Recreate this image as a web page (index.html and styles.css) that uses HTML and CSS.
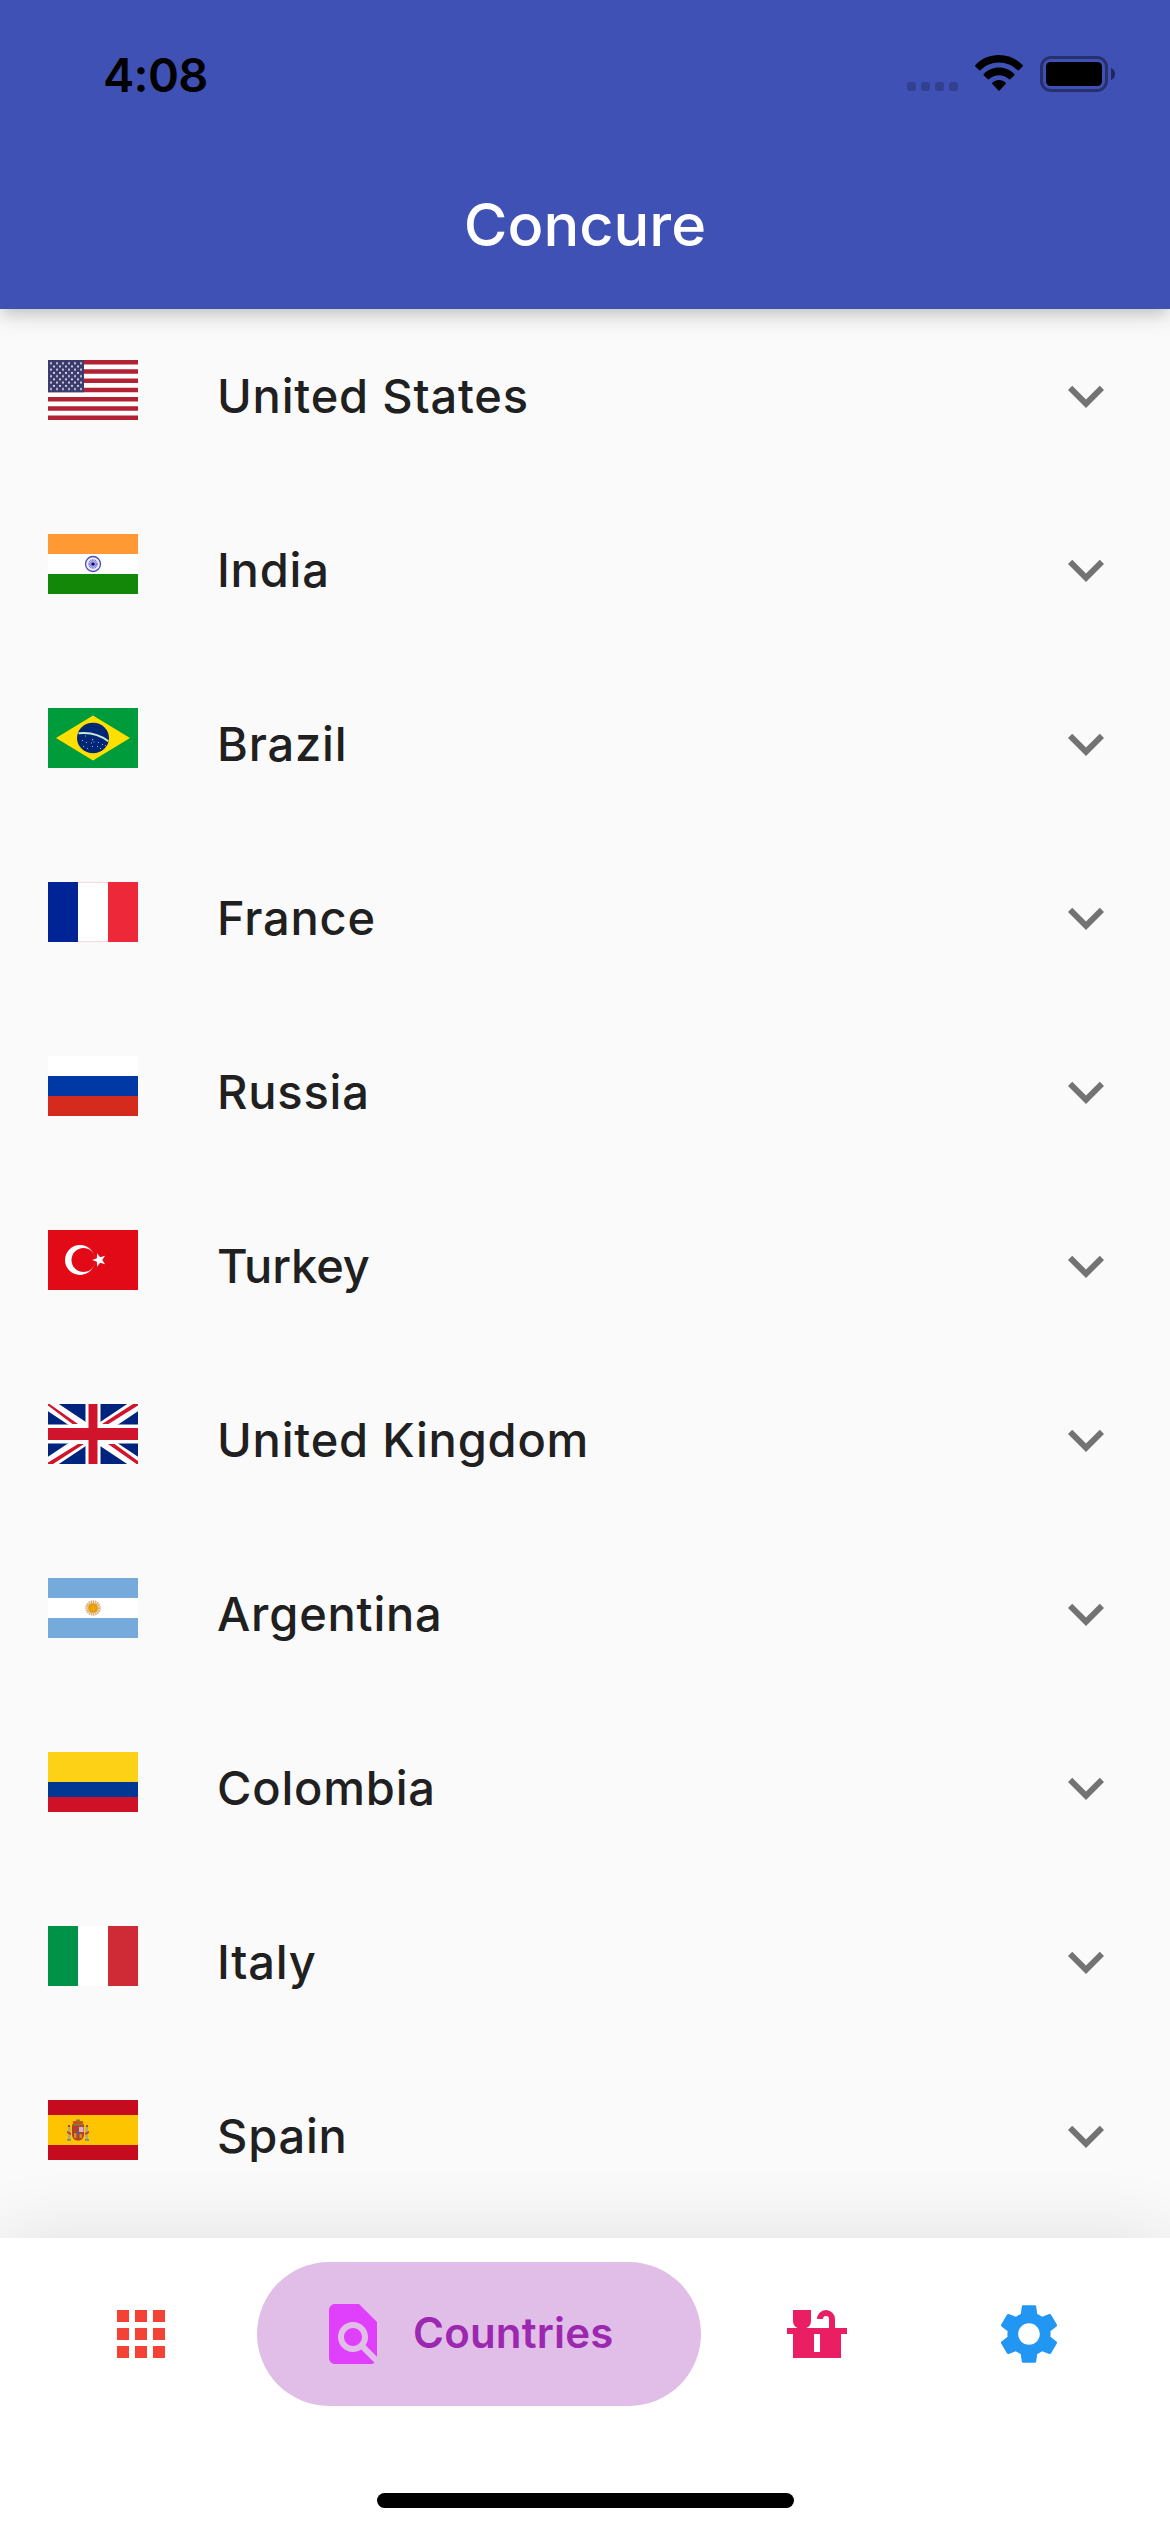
FILE: index.html
```html
<!DOCTYPE html>
<html lang="en">
<head>
<meta charset="utf-8">
<title>Concure</title>
<link rel="stylesheet" href="styles.css">
</head>
<body>
<svg class="defs" width="0" height="0" aria-hidden="true">
  <symbol id="chevron" viewBox="0 0 24 24"><path d="M16.59 8.59 12 13.17 7.41 8.59 6 10l6 6 6-6z"/></symbol>
</svg>
<div class="screen">
  <header class="header">
    <div class="status">
      <span class="time">4:08</span>
      <div class="indicators">
        <svg class="signal" viewBox="0 0 51 36"><g fill="#000" fill-opacity=".2"><rect y="27" width="9" height="9" rx="2.5"/><rect x="14" y="27" width="9" height="9" rx="2.5"/><rect x="28" y="27" width="9" height="9" rx="2.5"/><rect x="42" y="27" width="9" height="9" rx="2.5"/></g></svg>
        <svg class="wifi" viewBox="0 0 48 36"><path d="M24 0C14.800 0 6.300 3.700 .4 9.900c-.5.500-.5 1.100 0 1.600l3.600 3.600c.5.500 1.100.5 1.600 0C10.300 10.300 16.800 7.500 24 7.500s13.700 2.800 18.400 7.600c.5.500 1.100.5 1.600 0l3.600-3.600c.5-.5.500-1.100 0-1.600C41.700 3.700 33.200 0 24 0zM24 12.600c-5.900 0-11.200 2.400-15.100 6.200-.5.500-.5 1.100 0 1.600l3.700 3.700c.5.500 1.100.5 1.600 0 2.600-2.500 6-3.900 9.800-3.900s7.200 1.400 9.800 3.900c.5.500 1.100.5 1.600 0l3.700-3.700c.5-.5.500-1.100 0-1.600-3.900-3.800-9.200-6.200-15.100-6.200zM24 25c-2.500 0-4.800.9-6.500 2.400-.5.500-.6 1.100-.1 1.600l6 6.600c.4.500.8.500 1.200 0l6-6.600c.5-.5.400-1.100-.1-1.600C28.800 25.900 26.500 25 24 25z"/></svg>
        <svg class="battery" viewBox="0 0 75 36"><rect x="1.500" y="1.500" width="65" height="33" rx="9.500" fill="none" stroke="#000" stroke-opacity=".4" stroke-width="3"/><rect x="6" y="6" width="56" height="24" rx="4.500"/><path d="M71 12c2.600 1 4 3.300 4 6s-1.400 5-4 6z" fill-opacity=".5"/></svg>
      </div>
    </div>
    <h1 class="title">Concure</h1>
  </header>

  <main class="list">
    <div class="row">
      <svg class="flag" viewBox="0 0 90 60">
        <defs><pattern id="stars" width="6" height="6.460" patternUnits="userSpaceOnUse"><path fill="#d4d4e2" d="M2 2.200h2v2H2zM0 5.460h1v1H0zM5 5.460h1v1H5zM0 0h1v.97H0zM5 0h1v.97H5z"/></pattern></defs>
        <path fill="#fff" d="M0 0h90v60H0z"/>
        <path stroke="#b22234" stroke-width="4.615" d="M0 2.308h90M0 11.538h90M0 20.769h90M0 30h90M0 39.231h90M0 48.462h90M0 57.692h90"/>
        <path fill="#3c3b6e" d="M0 0h36v32.300H0z"/><path fill="url(#stars)" d="M1.500 1.500h33v29.300h-33z"/>
      </svg>
      <span class="name">United States</span><svg class="chevron"><use href="#chevron"/></svg>
    </div>
    <div class="row">
      <svg class="flag" viewBox="0 0 90 60"><path fill="#fff" d="M0 0h90v60H0z"/><path fill="#f93" d="M0 0h90v20H0z"/><path fill="#138808" d="M0 40h90v20H0z"/><circle cx="45" cy="30" r="7.500" fill="#eef" stroke="#4c4cb5" stroke-width="1.300"/><circle cx="45" cy="30" r="2.800" fill="none" stroke="#7777c8" stroke-width="4" stroke-dasharray=".7 .4"/><circle cx="45" cy="30" r="1.600" fill="#000088"/></svg>
      <span class="name">India</span><svg class="chevron"><use href="#chevron"/></svg>
    </div>
    <div class="row">
      <svg class="flag" viewBox="0 0 90 60"><path fill="#009c3b" d="M0 0h90v60H0z"/><path fill="#ffdf00" d="m8 30 37-22.500L82 30 45 52.500z"/><ellipse cx="45" cy="30" rx="16" ry="15.300" fill="#002776"/><path fill="none" stroke="#c9ead5" stroke-width="2" d="M30.500 25.300c11-1.200 22.200 2 29.800 8"/><g fill="#9db0d0"><path d="M37 27.500h1v1h-1zM34 32h1v1h-1zM38 34h1v1h-1zM44 31h1.200v1.200H44zM43 34.500h1v1h-1zM45.500 33.500h1v1h-1zM44 38h1v1h-1zM49 38h1v1h-1zM52 40h1v1h-1zM54 36h1v1h-1zM57 37h1v1h-1zM35 38h1v1h-1zM50 34h1v1h-1zM39 40h1v1h-1z"/></g></svg>
      <span class="name">Brazil</span><svg class="chevron"><use href="#chevron"/></svg>
    </div>
    <div class="row">
      <svg class="flag" viewBox="0 0 90 60"><path fill="#002395" d="M0 0h30v60H0z"/><path fill="#fff" d="M30 0h30v60H30z"/><path fill="#fbd7db" d="M30 0h30v1H30zM30 59h30v1H30z"/><path fill="#ed2939" d="M60 0h30v60H60z"/></svg>
      <span class="name">France</span><svg class="chevron"><use href="#chevron"/></svg>
    </div>
    <div class="row">
      <svg class="flag" viewBox="0 0 90 60"><path fill="#fff" d="M0 0h90v20H0z"/><path fill="#0039a6" d="M0 20h90v20H0z"/><path fill="#d52b1e" d="M0 40h90v20H0z"/></svg>
      <span class="name">Russia</span><svg class="chevron"><use href="#chevron"/></svg>
    </div>
    <div class="row">
      <svg class="flag" viewBox="0 0 90 60"><path fill="#e30a17" d="M0 0h90v60H0z"/><circle cx="32" cy="30" r="15" fill="#fff"/><circle cx="35.500" cy="30" r="12" fill="#e30a17"/><path fill="#fff" d="m44.200 30 4.700-1.700.1-5 3.100 3.900 4.900-1.500-2.700 4.300 2.700 4.300-4.900-1.500-3.100 3.900-.1-5z"/></svg>
      <span class="name tight">Turkey</span><svg class="chevron"><use href="#chevron"/></svg>
    </div>
    <div class="row">
      <svg class="flag" viewBox="0 0 90 60"><path fill="#00247d" d="M0 0h90v60H0z"/><path stroke="#fff" stroke-width="12" d="m0 0 90 60M90 0 0 60"/><path fill="#cf142b" d="M0 0v1.500L24.500 20H30L1.500 0zM85 0 54 20h6.500L90 1.500V0zM0 60h5l31-20h-6L0 58.500zM90 60v-3L66.500 40H60l28.500 20z"/><path fill="#fff" d="M37.500 0h15v60h-15zM0 20.500h90v19H0z"/><path fill="#cf142b" d="M40.500 0h9v60h-9zM0 24h90v12H0z"/></svg>
      <span class="name">United Kingdom</span><svg class="chevron"><use href="#chevron"/></svg>
    </div>
    <div class="row">
      <svg class="flag" viewBox="0 0 90 60"><path fill="#fff" d="M0 0h90v60H0z"/><path fill="#75aadb" d="M0 0h90v20H0zM0 40h90v20H0z"/><circle cx="45" cy="30" r="6" fill="none" stroke="#d9b27c" stroke-width="3.500" stroke-dasharray="1.400 .55"/><circle cx="45" cy="30" r="4.800" fill="#e39a10"/><circle cx="45" cy="30" r="3" fill="#f0a30c"/></svg>
      <span class="name">Argentina</span><svg class="chevron"><use href="#chevron"/></svg>
    </div>
    <div class="row">
      <svg class="flag" viewBox="0 0 90 60"><path fill="#fcd116" d="M0 0h90v30H0z"/><path fill="#003893" d="M0 30h90v15H0z"/><path fill="#ce1126" d="M0 45h90v15H0z"/></svg>
      <span class="name">Colombia</span><svg class="chevron"><use href="#chevron"/></svg>
    </div>
    <div class="row">
      <svg class="flag" viewBox="0 0 90 60"><path fill="#009246" d="M0 0h30v60H0z"/><path fill="#fff" d="M30 0h30v60H30z"/><path fill="#ce2b37" d="M60 0h30v60H60z"/></svg>
      <span class="name">Italy</span><svg class="chevron"><use href="#chevron"/></svg>
    </div>
    <div class="row">
      <svg class="flag" viewBox="0 0 90 60"><path fill="#c60b1e" d="M0 0h90v60H0z"/><path fill="#ffc400" d="M0 15h90v30H0z"/><path fill="#b5402a" d="M24 25h12v9c0 4-2 6.500-6 6.500S24 38 24 34z"/><path fill="#c9501c" d="M24.500 21.500l1 3h9l1-3-5.500-1z"/><path fill="#d9b4c8" d="M31 27h4.500v5H31z"/><path fill="#8f7a3a" d="M24 24h12v1.500H24zM28 19.500h4v2h-4z"/><path fill="#d98a1c" d="M26 33h2.500v5H26zM31.500 34h2.500v4h-2.500z"/><circle cx="30" cy="33" r="1.500" fill="#2a6cb0"/><path fill="#b9a77c" d="M20 27h2.500v12H20zM37.500 27H40v12h-2.500z"/><path fill="#b8431d" d="M19 31l4 2v2l-4-2zM37 33l4-2v2l-4 2zM20 25h2v2h-2zM38 25h2v2h-2z"/><path fill="#78906f" d="M19 39h4v1.800h-4zM37 39h4v1.800h-4z"/></svg>
      <span class="name">Spain</span><svg class="chevron"><use href="#chevron"/></svg>
    </div>
  </main>

  <footer class="footer">
    <nav class="tabs">
      <a class="tab"><svg class="icon" viewBox="0 0 24 24" fill="#f44336"><path d="M4 8h4V4H4zm6 12h4v-4h-4zm-6 0h4v-4H4zm0-6h4v-4H4zm6 0h4v-4h-4zm6-10v4h4V4zm-6 4h4V4h-4zm6 6h4v-4h-4zm0 6h4v-4h-4z"/></svg></a>
      <a class="tab active"><svg class="icon" viewBox="0 0 24 24" fill="#e040fb"><path d="M20 19.590V8l-6-6H6c-1.100 0-1.990.9-1.990 2L4 20c0 1.100.89 2 1.990 2H18c.45 0 .85-.15 1.190-.4l-4.430-4.430c-.8.520-1.740.83-2.760.83-2.760 0-5-2.240-5-5s2.240-5 5-5 5 2.240 5 5c0 1.020-.31 1.960-.83 2.750zM9 13c0 1.660 1.340 3 3 3s3-1.340 3-3-1.340-3-3-3-3 1.340-3 3z"/></svg><span class="label">Countries</span></a>
      <a class="tab"><svg class="icon" viewBox="0 0 24 24" fill="#e91e63"><path d="M22 10v2h-2v8H4v-8H2v-2h3.500A2.500 2.500 0 0 1 4 7.700V4h6v3.700A2.500 2.500 0 0 1 8.500 10H16V7a1 1 0 0 0-2 0h-2a3 3 0 0 1 6 0v3zm-11 2v6h2v-6z"/></svg></a>
      <a class="tab"><svg class="icon" viewBox="0 0 24 24" fill="#2196f3"><path d="M19.140 12.940c.04-.3.060-.61.060-.94 0-.32-.02-.64-.07-.94l2.030-1.580c.18-.14.23-.41.12-.61l-1.920-3.320c-.12-.22-.37-.29-.59-.22l-2.390.96c-.5-.38-1.030-.7-1.620-.94l-.36-2.540c-.04-.24-.24-.41-.48-.41h-3.840c-.24 0-.43.17-.47.41l-.36 2.540c-.59.24-1.130.57-1.620.94l-2.390-.96c-.22-.08-.47 0-.59.220L2.740 8.870c-.12.210-.08.470.12.610l2.030 1.580c-.05.3-.09.630-.09.940s.02.640.07.940l-2.030 1.580c-.18.140-.23.410-.12.610l1.920 3.320c.12.220.37.290.59.220l2.390-.96c.5.380 1.030.7 1.620.94l.36 2.540c.05.240.24.410.48.410h3.840c.24 0 .44-.17.47-.41l.36-2.540c.59-.24 1.130-.56 1.620-.94l2.390.96c.22.080.47 0 .59-.22l1.920-3.320c.12-.22.070-.47-.12-.61zM12 15.600c-1.980 0-3.600-1.620-3.600-3.600s1.620-3.600 3.600-3.600 3.600 1.620 3.600 3.600-1.620 3.600-3.600 3.600z"/></svg></a>
    </nav>
    <div class="home-bar"></div>
  </footer>
</div>
</body>
</html>
```
FILE: styles.css
```css
* { box-sizing: border-box; }

body {
  margin: 0;
  font-family: Inter, "Liberation Sans", sans-serif;
}

.defs { display: block; }

.screen {
  display: flex;
  flex-direction: column;
  width: 1170px;
  height: 2532px;
  overflow: hidden;
  background: #fafafa;
}

.header {
  position: relative;
  z-index: 1;
  flex: none;
  height: 309px;
  background: #3f51b5;
  box-shadow: 0 6px 12px -3px rgba(0, 0, 0, .12), 0 12px 15px rgba(0, 0, 0, .06), 0 3px 30px rgba(0, 0, 0, .08);
}

.status {
  display: flex;
  justify-content: space-between;
  height: 141px;
  padding: 46px 55px 0 103px;
}

.time {
  height: 57px;
  font-size: 47px;
  font-weight: 600;
  letter-spacing: -.7px;
  line-height: 57px;
}

.indicators {
  display: flex;
  padding-top: 9px;
}

.signal { width: 51px; height: 36px; margin-right: 17px; }
.wifi { width: 48px; height: 36px; margin-right: 17px; }
.battery { width: 75px; height: 36px; margin-top: 1px; }

.title {
  margin: 0;
  height: 168px;
  color: #fff;
  font-size: 59.500px;
  font-weight: 500;
  line-height: 166px;
  text-align: center;
}

.list { flex: 1; min-height: 0; }

.row {
  display: flex;
  align-items: center;
  height: 174px;
  padding: 0 48px;
}

.flag {
  flex: none;
  width: 90px;
  height: 60px;
  margin-bottom: 12px;
}

.name {
  flex: 1;
  margin: 0 0 2px 79px;
  color: #202020;
  font-size: 47px;
  font-weight: 450;
  letter-spacing: .8px;
  white-space: nowrap;
}

.tight { letter-spacing: -.1px; }

.chevron {
  flex: none;
  width: 72px;
  height: 72px;
  fill: #737373;
}

.footer {
  position: relative;
  z-index: 1;
  display: flex;
  flex: none;
  flex-direction: column;
  align-items: center;
  justify-content: space-between;
  height: 294px;
  padding: 24px 0;
  background: #fff;
  box-shadow: 0 0 70px rgba(0, 0, 0, .11);
}

.tabs {
  display: flex;
  justify-content: space-between;
  width: 1080px;
}

.tab {
  display: flex;
  align-items: center;
  height: 144px;
  padding: 0 60px;
  border-radius: 72px;
}

.active {
  width: 444px;
  background: #e1bee7;
}

.icon { flex: none; width: 72px; height: 72px; }

.label {
  margin: 0 0 3px 24px;
  color: #9c27b0;
  font-size: 42px;
  font-weight: 600;
  letter-spacing: .2px;
}

.home-bar {
  width: 417px;
  height: 15px;
  border-radius: 8px;
  background: #000;
}
```
